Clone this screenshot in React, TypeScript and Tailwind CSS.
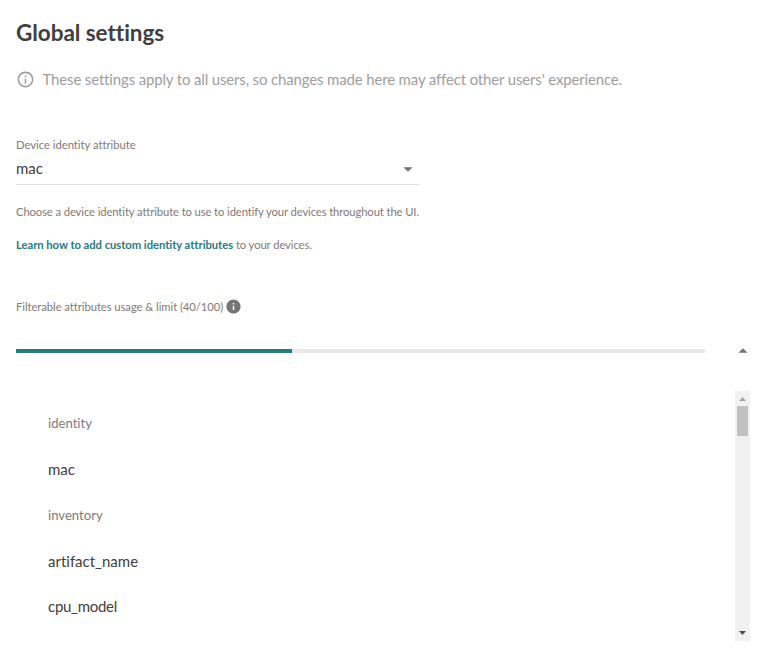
export default function App() {
  return (
    <div className="h-[661px] w-[762px] overflow-hidden bg-white pt-[18px] pl-4 font-['Lato',sans-serif] text-[#404041] [font-variant-ligatures:none]">
      <h2 className="text-[22.5px] leading-[30px] font-bold tracking-[-0.04px]">Global settings</h2>
      <div className="mt-[19px] flex h-6 items-center text-[15px] text-[#9e9e9e]">
        <svg viewBox="0 0 24 24" className="mr-[7.5px] size-[19px] shrink-0" fill="currentColor">
          <path d="M11 7h2v2h-2zm0 4h2v6h-2zm1-9C6.48 2 2 6.48 2 12s4.48 10 10 10 10-4.48 10-10S17.52 2 12 2zm0 18c-4.41 0-8-3.59-8-8s3.59-8 8-8 8 3.59 8 8-3.59 8-8 8z" />
        </svg>
        <span className="tracking-[-0.155px]">These settings apply to all users, so changes made here may affect other users' experience.</span>
      </div>
      <div className="mt-[46px] w-[403px]">
        <div className="text-[11.25px] leading-4 tracking-[-0.02px] text-[#7f7977]">Device identity attribute</div>
        <div className="flex h-[32px] items-center justify-between border-b border-[#e0e0e0] text-[15px]">
          <span>mac</span>
          <svg viewBox="0 0 24 24" className="size-[22px]" fill="#757575"><path d="M7 10l5 5 5-5z" /></svg>
        </div>
      </div>
      <p className="mt-[19px] text-[11.25px] leading-4 tracking-[-0.11px] text-[#7f7977]">Choose a device identity attribute to use to identify your devices throughout the UI.</p>
      <p className="mt-[17px] text-[11.25px] leading-4 tracking-[-0.09px] text-[#7f7977]"><span className="font-bold tracking-[-0.04px] text-[#287b83]">Learn how to add custom identity attributes</span> to your devices.</p>
      <div className="mt-[44px] flex h-[18px] items-center text-[11.25px] text-[#7f7977]">
        <span className="relative top-px tracking-[-0.06px]">Filterable attributes usage &amp; limit (40/100)</span>
        <svg viewBox="0 0 24 24" className="ml-[2px] size-[17px]" fill="#757575"><path d="M12 2C6.48 2 2 6.48 2 12s4.48 10 10 10 10-4.48 10-10S17.52 2 12 2zm1 15h-2v-6h2v6zm0-8h-2V7h2v2z" /></svg>
      </div>
      <div className="mt-[24px] flex h-6 items-center">
        <div className="h-1 w-[689px] bg-[#e9e9e9]"><div className="h-1 w-[276px] bg-[#287b83]" /></div>
        <svg viewBox="0 0 24 24" className="ml-[27px] size-[22px]" fill="#757575"><path d="M7 14l5-5 5 5z" /></svg>
      </div>
      <div className="mt-[28px] flex h-[250px] justify-between pr-3 pl-8">
        <div className="pt-[22px] text-[15px] leading-5">
          <div className="text-[13.125px] text-[#7f7977]">identity</div>
          <div className="mt-[26px]">mac</div>
          <div className="mt-[26px] text-[13.125px] text-[#7f7977]">inventory</div>
          <div className="mt-[26px]">artifact_name</div>
          <div className="mt-[25px] tracking-[-0.28px]">cpu_model</div>
        </div>
        <div className="flex w-[15px] flex-col items-center bg-[#f1f1f1]">
          <svg viewBox="0 0 15 15" className="size-[15px]" fill="#a3a3a3"><path d="M4 10l3.5-4 3.5 4z" /></svg>
          <div className="h-[30px] w-[11px] bg-[#c1c1c1]" />
          <svg viewBox="0 0 15 15" className="mt-auto size-[15px]" fill="#505050"><path d="M4 5l3.5 4L11 5z" /></svg>
        </div>
      </div>
    </div>
  );
}
